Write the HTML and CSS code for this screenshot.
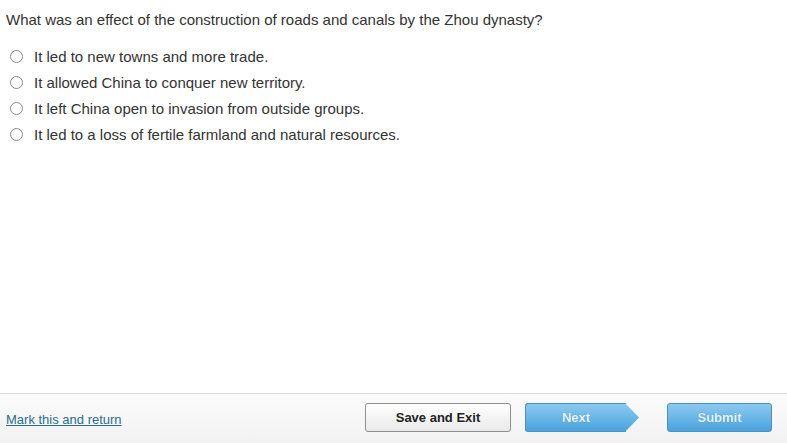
FILE: index.html
```html
<!DOCTYPE html>
<html>
<head>
<meta charset="utf-8">
<link rel="stylesheet" href="styles.css">
</head>
<body>
<div class="page">
  <main class="content">
    <p class="question">What was an effect of the construction of roads and canals by the Zhou dynasty?</p>
    <ul class="options">
      <li class="option"><span class="radio"></span><span>It led to new towns and more trade.</span></li>
      <li class="option"><span class="radio"></span><span>It allowed China to conquer new territory.</span></li>
      <li class="option"><span class="radio"></span><span>It left China open to invasion from outside groups.</span></li>
      <li class="option"><span class="radio"></span><span>It led to a loss of fertile farmland and natural resources.</span></li>
    </ul>
  </main>
  <footer class="footer">
    <a class="mark" href="#">Mark this and return</a>
    <div class="actions">
      <button class="btn btn-save">Save and Exit</button>
      <button class="btn btn-next">Next<span class="arrow"></span></button>
      <button class="btn btn-submit">Submit</button>
    </div>
  </footer>
</div>
</body>
</html>
```
FILE: styles.css
```css
* { box-sizing: border-box; }
html, body { margin: 0; padding: 0; background: #fff; }
body {
  font-family: "Liberation Sans", Arial, sans-serif;
  color: #333;
  width: 787px;
  height: 443px;
  overflow: hidden;
}
.page {
  display: flex;
  flex-direction: column;
  height: 443px;
}
.content {
  flex: 1;
  padding: 11px 6px 0 6px;
}
.question {
  margin: 0;
  font-size: 15px;
  line-height: 18px;
}
.options {
  list-style: none;
  margin: 14px 0 0 0;
  padding: 0;
}
.option {
  display: flex;
  align-items: center;
  height: 26px;
  font-size: 15px;
  gap: 11px;
  padding-left: 4px;
}
.radio {
  width: 13px;
  height: 13px;
  border: 1px solid #8a8a8a;
  border-radius: 50%;
  background: #fff;
  flex: none;
}
.footer {
  height: 50px;
  border-top: 1px solid #d9d9d9;
  background: linear-gradient(#fbfbfb, #f2f2f2);
  display: flex;
  align-items: center;
  justify-content: space-between;
  padding: 0 15px 2px 6px;
}
.mark {
  color: #2b6e8c;
  font-size: 13px;
  text-decoration: underline;
  margin-top: 4px;
}
.actions {
  display: flex;
  align-items: center;
}
.btn {
  font-family: "Liberation Sans", Arial, sans-serif;
  font-weight: bold;
  font-size: 13px;
  height: 29px;
  border-radius: 3px;
  padding: 0;
  cursor: pointer;
}
.btn-save {
  width: 146px;
  color: #222;
  border: 1px solid #8e8e8e;
  background: linear-gradient(#ffffff, #e9e9e9);
}
.btn-next {
  position: relative;
  width: 101px;
  margin-left: 14px;
  color: #e8f4fc;
  border: 1px solid #4d8fc0;
  border-right: none;
  border-radius: 3px 0 0 3px;
  background: linear-gradient(#8ccaf0, #4aa3dd);
  text-align: center;
  text-shadow: 0 0 1px #3a7fb0;
}
.btn-next .arrow {
  position: absolute;
  right: -13px;
  top: -1px;
  width: 14px;
  height: 29px;
  background: linear-gradient(#8ccaf0, #4aa3dd);
  clip-path: polygon(0 0, 100% 50%, 0 100%);
}
.btn-submit {
  width: 105px;
  margin-left: 41px;
  color: #e8f4fc;
  border: 1px solid #4d8fc0;
  background: linear-gradient(#8ccaf0, #4aa3dd);
  text-shadow: 0 0 1px #3a7fb0;
}
```
